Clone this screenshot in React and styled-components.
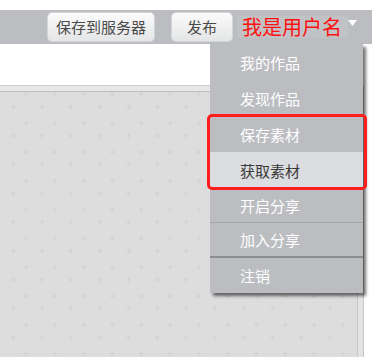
import React from 'react';
import styled, { createGlobalStyle } from 'styled-components';

const GlobalStyle = createGlobalStyle`
  html, body {
    margin: 0;
    padding: 0;
    background: #ffffff;
  }
  body {
    font-family: "Noto Sans CJK SC", "Liberation Sans", sans-serif;
  }
`;

const Page = styled.div`
  display: flex;
  flex-direction: column;
  min-height: 100vh;
  padding-top: 10px;
  box-sizing: border-box;
`;

const Toolbar = styled.div`
  position: relative;
  width: 372px;
  height: 34px;
  box-sizing: border-box;
  padding-right: 15px;
  background: #bcbdc1;
  display: flex;
  align-items: center;
  justify-content: flex-end;
`;

const ToolButton = styled.button`
  height: 30px;
  min-width: 62px;
  padding: 0 8px;
  margin-right: ${({ gap }) => gap}px;
  border: 1px solid #d4d5d8;
  border-radius: 5px;
  background: linear-gradient(#fbfbfb, #e4e5e6);
  color: #4a4a4a;
  font-family: inherit;
  font-size: 15px;
  line-height: 28px;
  cursor: pointer;
`;

const User = styled.div`
  display: flex;
  align-items: center;
  height: 34px;
  cursor: pointer;
`;

const UserName = styled.span`
  display: block;
  padding: 0 6px 0 5px;
  height: 22px;
  line-height: 22px;
  font-size: 20px;
  color: #ff1010;
  background: #c1c2c5;
`;

const Caret = styled.svg`
  display: block;
  width: 9px;
  height: 6px;
  margin-top: -9px;
`;

const Dropdown = styled.ul`
  position: absolute;
  top: 34px;
  right: 9px;
  z-index: 5;
  width: 153px;
  margin: 0;
  padding: 0;
  list-style: none;
  background: #bcbdc1;
  box-shadow: 3px 3px 3px rgba(0, 0, 0, 0.55);
`;

const MenuItem = styled.li`
  box-sizing: border-box;
  height: ${({ tall }) => (tall ? 36 : 35)}px;
  display: flex;
  align-items: center;
  padding-left: 30px;
  font-size: 15px;
  color: ${({ active }) => (active ? '#3a3a3a' : '#ffffff')};
  background: ${({ active }) => (active ? '#dcdde1' : 'transparent')};
  border-bottom: ${({ divider }) => divider || 'none'};
`;

const Marked = styled.div`
  position: relative;

  &::after {
    content: '';
    position: absolute;
    top: -2px;
    bottom: -2px;
    left: -3px;
    right: -4px;
    border: 3px solid #ff1d1d;
    border-radius: 5px;
    pointer-events: none;
  }
`;

const Blank = styled.div`
  height: 41px;
`;

const Workspace = styled.div`
  flex: 1;
  display: flex;
  flex-direction: column;
  width: 364px;
  border-top: 1px solid #cdcecd;
  border-right: 1px solid #c6c7c6;
  box-sizing: border-box;
`;

const Ruler = styled.div`
  height: 5px;
  background: #e6e7e6;
  border-bottom: 1px solid #bdbebd;
`;

const Stage = styled.div`
  flex: 1;
  display: flex;
  background: #e2e3e2;
  padding-right: 5px;
`;

const Canvas = styled.div`
  flex: 1;
  background: #dcdddc;
  border-right: 1px solid #c9cac9;
`;

const Grid = styled.svg`
  display: block;
  width: 100%;
  height: 100%;
`;

const menu = [
  { label: '我的作品', tall: true },
  { label: '发现作品', tall: true },
  { label: '保存素材', tall: true, marked: true },
  { label: '获取素材', tall: true, marked: true, active: true },
  { label: '开启分享', divider: '1px solid #a4a5a9' },
  { label: '加入分享', divider: '2px solid #8c8d90' },
  { label: '注销' },
];

export default function App() {
  const plain = menu.filter(m => !m.marked);
  const marked = menu.filter(m => m.marked);

  return (
    <Page>
      <GlobalStyle />
      <Toolbar>
        <ToolButton gap={16}>保存到服务器</ToolButton>
        <ToolButton gap={4}>发布</ToolButton>
        <User>
          <UserName>我是用户名</UserName>
          <Caret viewBox="0 0 9 6">
            <path d="M0 0 L9 0 L4.5 6 Z" fill="#ffffff" />
          </Caret>
        </User>
        <Dropdown>
          {plain.slice(0, 2).map(m => (
            <MenuItem key={m.label} tall={m.tall}>{m.label}</MenuItem>
          ))}
          <Marked>
            {marked.map(m => (
              <MenuItem key={m.label} tall={m.tall} active={m.active}>
                {m.label}
              </MenuItem>
            ))}
          </Marked>
          {plain.slice(2).map(m => (
            <MenuItem key={m.label} divider={m.divider}>
              {m.label}
            </MenuItem>
          ))}
        </Dropdown>
      </Toolbar>
      <Blank />
      <Workspace>
        <Ruler />
        <Stage>
          <Canvas>
            <Grid>
              <defs>
                <pattern id="plus" width="28.8" height="28.8" x="0" y="0" patternUnits="userSpaceOnUse">
                  <path d="M23.5 2.5 h5 M26 0 v5 M10.8 14.8 h5 M13.3 12.3 v5" stroke="#cfd0cf" strokeWidth="1" />
                </pattern>
              </defs>
              <rect width="100%" height="100%" fill="url(#plus)" />
            </Grid>
          </Canvas>
        </Stage>
      </Workspace>
    </Page>
  );
}
